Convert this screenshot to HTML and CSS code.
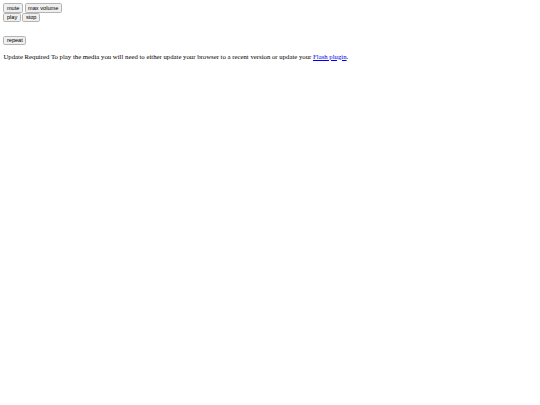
FILE: index.html
```html
<!DOCTYPE html>
<html>
<head>
<meta charset="utf-8">
<link rel="stylesheet" href="styles.css">
</head>
<body>
<div class="controls">
  <div class="row"><button class="btn">mute</button> <button class="btn">max volume</button></div>
  <div class="row"><button class="btn">play</button> <button class="btn">stop</button></div>
  <div class="spacer"></div>
  <div class="row"><button class="btn">repeat</button></div>
</div>
<p class="notice">Update Required To play the media you will need to either update your browser to a recent version or update your <a class="link" href="#">Flash plugin</a>.</p>
</body>
</html>
```
FILE: styles.css
```css
html {
  background: #fff;
}
body {
  margin: 3.4px;
  font-family: "Liberation Serif", serif;
  font-size: 6.75px;
  color: #000;
}
.row {
  line-height: 8.9px;
  font-size: 6.75px;
}
.btn {
  font-family: "Liberation Sans", Arial, sans-serif;
  font-size: 5.625px;
  line-height: 6.5px;
  padding: 0.45px 2.5px;
  margin: 0;
  border: 1px solid #b4b4b4;
  border-radius: 1.7px;
  background: #efefef;
  color: #000;
}
.spacer {
  height: 13.5px;
}
.notice {
  margin: 7.6px 0;
  line-height: 1.15;
}
.link {
  color: #0000ee;
}
```
